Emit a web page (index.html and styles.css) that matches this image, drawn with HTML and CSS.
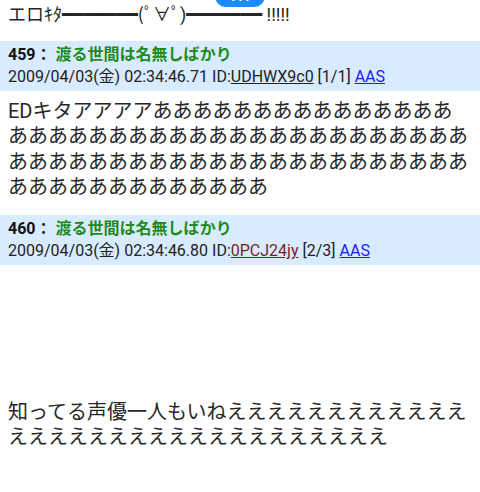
FILE: index.html
```html
<!DOCTYPE html>
<html lang="ja">
<head>
<meta charset="utf-8">
<title>thread</title>
<link rel="stylesheet" href="styles.css">
</head>
<body>
<div class="pill" aria-hidden="true"><span class="dot"></span><span class="dot"></span><span class="dot"></span></div>
<main class="thread">
  <div class="post-body top-body">エロｷﾀ<span class="bar">━━━━━━━</span>(ﾟ∀ﾟ)<span class="bar">━━━━━━━</span> !!!!!</div>

  <article class="post">
    <header class="post-head">
      <div class="head-line"><b class="num">459</b><span class="colon">：</span> <span class="name">渡る世間は名無しばかり</span></div>
      <div class="meta">2009/04/03(金) 02:34:46.71 ID:<a class="id">UDHWX9c0</a> [1/1] <a class="aas">AAS</a></div>
    </header>
    <div class="post-body">EDキタアアアアああああああああああああああああああああああああああああああああああああああああああああああああああああああああああああああああああああああああああ</div>
  </article>

  <article class="post">
    <header class="post-head">
      <div class="head-line"><b class="num">460</b><span class="colon">：</span> <span class="name">渡る世間は名無しばかり</span></div>
      <div class="meta">2009/04/03(金) 02:34:46.80 ID:<a class="id id-multi">0PCJ24jy</a> [2/3] <a class="aas">AAS</a></div>
    </header>
    <div class="post-body"><br><br><br><br><br>知ってる声優一人もいねえええええええええええええええええええええええええええええええ</div>
  </article>
</main>
</body>
</html>
```

FILE: styles.css
```css
* { box-sizing: border-box; }
html, body {
  margin: 0;
  padding: 0;
  background: #ffffff;
}
body {
  width: 480px;
  height: 492px;
  overflow: hidden;
  position: relative;
  font-family: Roboto, "Noto Sans CJK JP", sans-serif;
  color: #222222;
}
.pill {
  position: absolute;
  left: 215px;
  top: -15px;
  width: 50px;
  height: 22px;
  border-radius: 11px;
  background: #1a8cff;
  display: flex;
  justify-content: center;
  align-items: flex-start;
  gap: 4px;
  padding-top: 13px;
}
.dot {
  width: 3px;
  height: 3px;
  border-radius: 50%;
  background: #ffffff;
}
.thread {
  display: flex;
  flex-direction: column;
}
.post-body {
  padding: 8px 8px 15px;
  font-size: 20px;
  line-height: 25.3px;
  color: #262626;
  word-break: break-all;
}
.top-body {
  padding: 2px 8px 13px;
  font-size: 18px;
  line-height: 26px;
}
.bar {
  font-family: "DejaVu Sans", sans-serif;
}
.post-head {
  background: #d8ebff;
  padding: 3px 8px 3px;
  font-size: 16px;
  line-height: 22px;
  color: #222222;
}
.num {
  font-weight: 700;
  color: #111111;
}
.colon {
  font-weight: 700;
  color: #222222;
}
.name {
  font-weight: 700;
  color: #1e8a1e;
}
.id {
  color: #222222;
  text-decoration: underline;
}
.id-multi {
  color: #7a1f1f;
}
.aas {
  color: #1a1aff;
  text-decoration: underline;
}
```
